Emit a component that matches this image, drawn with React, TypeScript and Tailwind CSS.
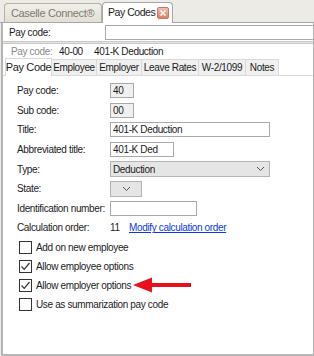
import React from 'react';

const font = { fontFamily: '"Liberation Sans", Arial, sans-serif' };

function Chevron() {
  return (
    <svg width="9" height="6" viewBox="0 0 9 6" className="text-[#555]">
      <path d="M1 1 L4.5 4.5 L8 1" fill="none" stroke="currentColor" strokeWidth="1" />
    </svg>
  );
}

function Check({ checked }: { checked?: boolean }) {
  return (
    <div className="w-[13px] h-[13px] shrink-0 border border-[#333] bg-white flex items-center justify-center">
      {checked && (
        <svg width="11" height="11" viewBox="0 0 11 11">
          <path d="M1.5 5.5 L4.2 8.3 L9.5 2" fill="none" stroke="#333" strokeWidth="1.2" />
        </svg>
      )}
    </div>
  );
}

// form rows on the Pay Code tab
function Row({ label, children }: { label: string; children?: React.ReactNode }) {
  return (
    <div className="flex items-center h-[19.6px]">
      <span className="w-[93px] shrink-0">{label}</span>
      {children}
    </div>
  );
}

const tabs: [string, string][] = [
  ['Pay Code', 'w-[47px]'],
  ['Employee', 'w-[45px]'],
  ['Employer', 'w-[45px]'],
  ['Leave Rates', 'w-[57px]'],
  ['W-2/1099', 'w-[47px]'],
  ['Notes', 'w-[33px]'],
];

export default function App() {
  return (
    <div style={font} className="w-[314px] h-[356px] bg-[#ecebe6] flex flex-col overflow-hidden text-[10px] tracking-[-0.35px] whitespace-nowrap text-[#1b1b1b] relative">
      {/* document tabs */}
      <div className="h-[23px] flex items-end pl-[4px] border-b border-[#a7a7a7] shrink-0">
        <div className="h-[19px] w-[98px] border border-b-0 border-[#b3b1a8] rounded-t-[4px] bg-gradient-to-b from-[#f1efe8] to-[#e2dfd5] text-[#7c7a74] text-[11px] flex items-center pl-[6px]">
          Caselle Connect®
        </div>
        <div className="h-[21px] w-[71px] -mb-px border border-b-0 border-[#a7a7a7] rounded-t-[4px] bg-white text-[10.5px] tracking-[-0.45px] flex items-center pl-[5px] pr-[3px]">
          <span>Pay Codes</span>
          <span className="ml-auto w-[12px] h-[12px] rounded-[2px] border border-[#c27a6e] bg-gradient-to-b from-[#f6bcae] to-[#e27e6a] flex items-center justify-center">
            <svg width="8" height="8" viewBox="0 0 8 8">
              <path d="M1.5 1.5 L6.5 6.5 M6.5 1.5 L1.5 6.5" stroke="white" strokeWidth="1.6" />
            </svg>
          </span>
        </div>
      </div>

      <div className="flex-1 flex flex-col bg-white border-l-2 border-r border-b-2 border-[#b5b5b5] ml-[1px]">
        <div className="h-[18px] flex items-center pl-[6px] shrink-0">
          <span className="w-[96px] shrink-0">Pay code:</span>
          <div className="flex-1 h-[15px] border border-r-0 border-[#a9a9a9] bg-white"></div>
        </div>
        <div className="h-[3px] border-t border-b border-[#c9c9c9] bg-[#e4e4e4] shrink-0"></div>
        <div className="h-[14px] flex items-center pl-[8px] shrink-0">
          <span className="w-[48px] text-[#8a8a8a]">Pay code:</span>
          <span className="w-[35px]">40-00</span>
          <span>401-K Deduction</span>
        </div>

        {/* section tabs */}
        <div className="h-[18px] flex items-end pl-[2px] border-b border-[#d9d9d9] shrink-0">
          {tabs.map(([t, w], i) =>
            i === 0 ? (
              <div key={t} className={`${w} h-[18px] -mb-px bg-white border border-b-0 border-[#d9d9d9] flex items-center justify-center text-[11px]`}>
                {t}
              </div>
            ) : (
              <div key={t} className={`${w} h-[16px] bg-[#f0f0f0] border border-b-0 border-l-0 border-[#d9d9d9] flex items-center justify-center`}>
                {t}
              </div>
            )
          )}
        </div>

        <div className="flex flex-col pl-[14px] pt-[5px]">
          <Row label="Pay code:">
            <div className="w-[24px] h-[15px] border border-[#a9a9a9] bg-[#f0f0f0] pl-[2px] leading-[13px]">40</div>
          </Row>
          <Row label="Sub code:">
            <div className="w-[24px] h-[15px] border border-[#a9a9a9] bg-[#f0f0f0] pl-[2px] leading-[13px]">00</div>
          </Row>
          <Row label="Title:">
            <div className="w-[160px] h-[15px] border border-[#a9a9a9] bg-white pl-[2px] leading-[13px]">401-K Deduction</div>
          </Row>
          <Row label="Abbreviated title:">
            <div className="w-[64px] h-[15px] border border-[#a9a9a9] bg-white pl-[2px] leading-[13px]">401-K Ded</div>
          </Row>
          <Row label="Type:">
            <div className="w-[160px] h-[16px] border border-[#b3b3b3] bg-[#e5e5e5] pl-[2px] pr-[4px] flex items-center justify-between">
              <span>Deduction</span>
              <Chevron />
            </div>
          </Row>
          <Row label="State:">
            <div className="w-[32px] h-[16px] border border-[#b3b3b3] bg-[#e5e5e5] pr-[10px] flex items-center justify-end">
              <Chevron />
            </div>
          </Row>
          <Row label="Identification number:">
            <div className="w-[87px] h-[15px] border border-[#a9a9a9] bg-white"></div>
          </Row>
          <Row label="Calculation order:">
            <span className="w-[19px]">11</span>
            <span className="text-[#0b38e6] underline">Modify calculation order</span>
          </Row>
          <div className="flex flex-col pl-[2px]">
            {[
              ['Add on new employee', false],
              ['Allow employee options', true],
              ['Allow employer options', true],
              ['Use as summarization pay code', false],
            ].map(([label, checked]) => (
              <div key={label as string} className="h-[19px] flex items-center gap-[4px]">
                <Check checked={checked as boolean} />
                <span>{label as string}</span>
              </div>
            ))}
          </div>
        </div>
      </div>

      {/* red pointer arrow */}
      <svg className="absolute left-[133px] top-[277px]" width="58" height="16" viewBox="0 0 58 16">
        <path d="M0 8 L19 0.5 L19 6 L58 6 L58 10 L19 10 L19 15.5 Z" fill="#e8101c" />
      </svg>
    </div>
  );
}
